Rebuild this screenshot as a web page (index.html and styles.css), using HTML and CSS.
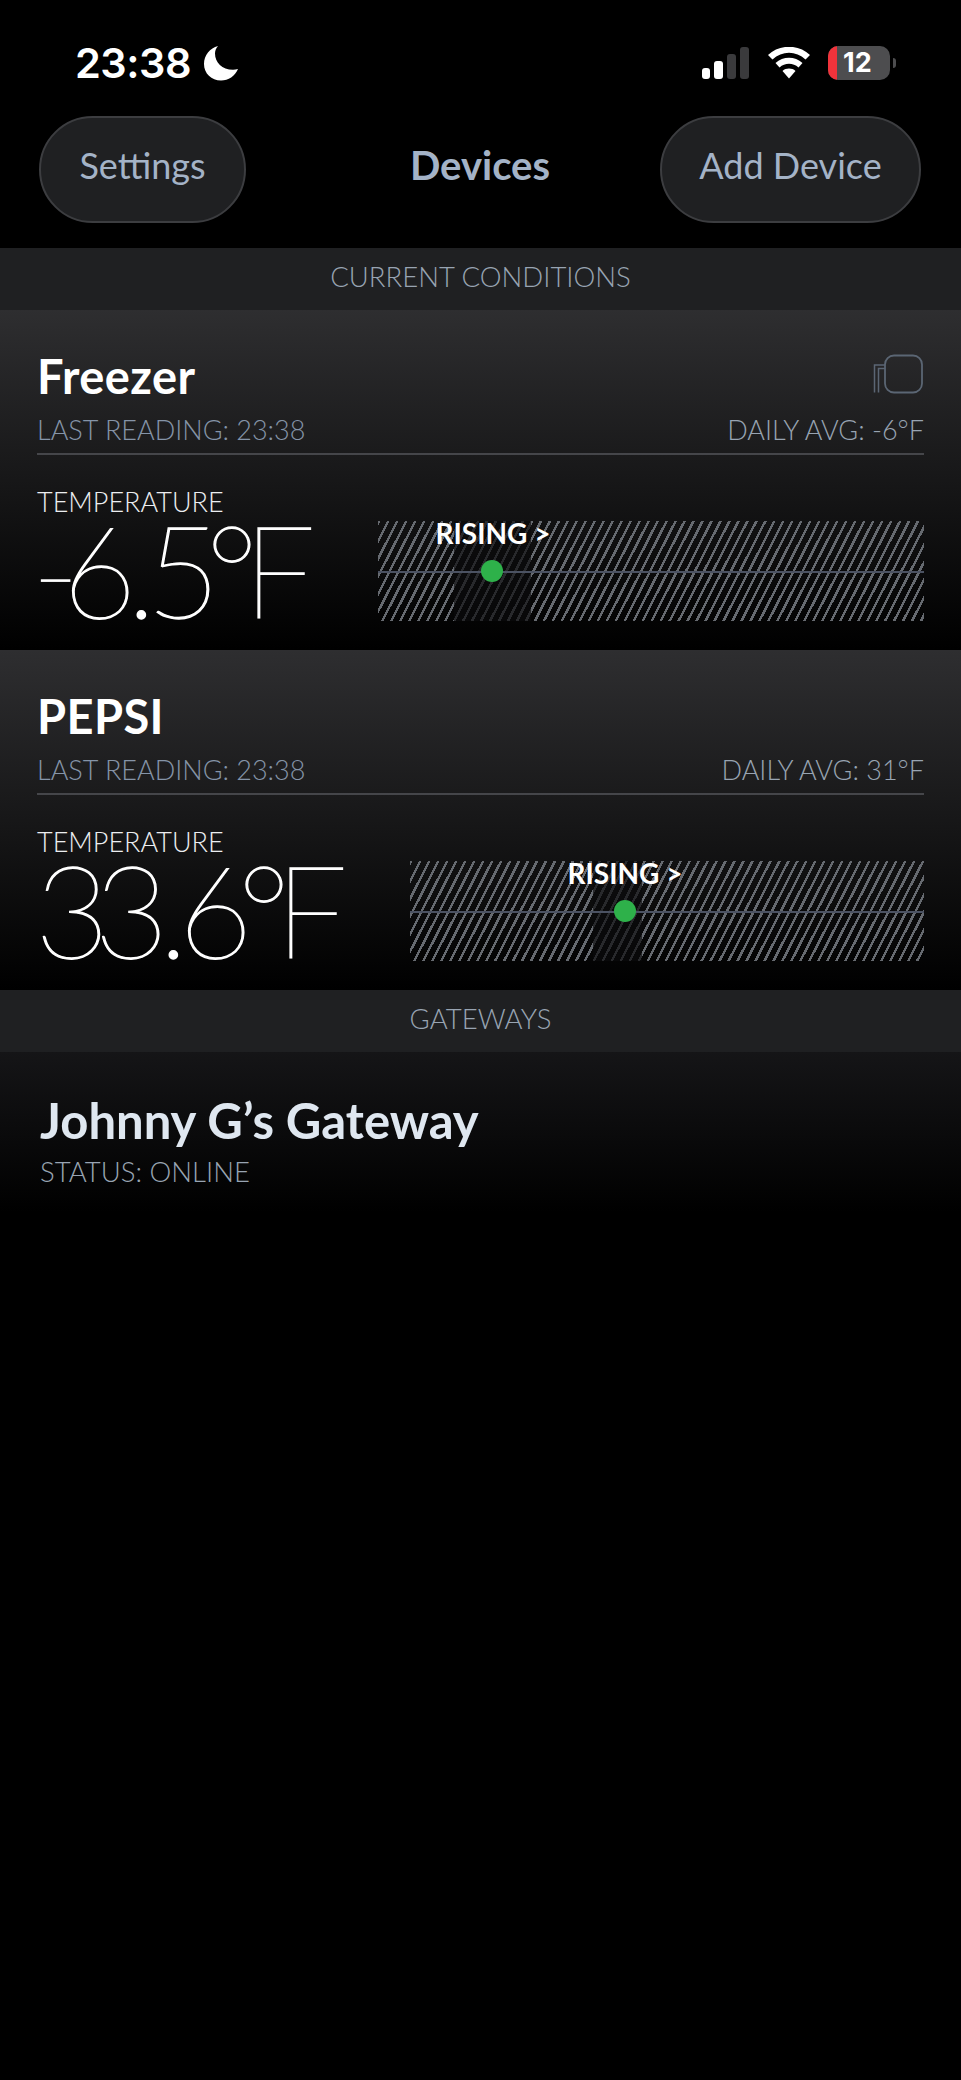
FILE: index.html
```html
<!DOCTYPE html>
<html lang="en">
<head>
<meta charset="utf-8">
<title>Devices</title>
<link rel="stylesheet" href="styles.css">
</head>
<body>
<div class="status">
  <div class="status-left">
    <span class="clock">23:38</span>
    <svg class="moon" viewBox="0 0 36 36"><path d="M15 1C7 3 1 10 1 19c0 9.500 7.500 16.500 17 16.500 7.500 0 14-4.500 17-11.500-1.500.5-3.500.8-5 .8C19 24.800 12 17.500 12 8.500 12 5.800 13 3.300 15 1z" fill="#fff"/></svg>
  </div>
  <div class="status-right">
    <svg class="signal" viewBox="0 0 50 32"><rect x="2" y="21" width="8" height="11" rx="3" fill="#fff"/><rect x="14" y="14" width="9" height="18" rx="3" fill="#fff"/><rect x="27" y="7" width="9" height="25" rx="3" fill="#3a3a3c"/><rect x="40" y="0" width="9" height="32" rx="3" fill="#3a3a3c"/></svg>
    <svg class="wifi" viewBox="0 0 42 32"><path d="M21 31.500 14.500 24c3.500-3.200 9.500-3.200 13 0z" fill="#fff"/><path d="M11.500 20.500 7.500 16c7.500-7 19.500-7 27 0l-4 4.500c-5.300-5-13.700-5-19 0z" fill="#fff"/><path d="M4.500 12.500 0 8c11.500-11 30.500-11 42 0l-4.500 4.500C28 3.500 14 3.500 4.500 12.500z" fill="#fff"/></svg>
    <div class="battery"><span class="battery-red"></span><span class="battery-num">12</span></div>
    <span class="battery-tip"></span>
  </div>
</div>

<nav class="nav">
  <button class="pill pill-settings">Settings</button>
  <h1 class="nav-title">Devices</h1>
  <button class="pill pill-add">Add Device</button>
</nav>

<h2 class="section">CURRENT CONDITIONS</h2>

<section class="card">
  <div class="card-top">
    <h3 class="name">Freezer</h3>
    <svg class="device" viewBox="0 0 52 40" fill="none" stroke="#5b6674" stroke-width="1.800"><rect x="13" y="1.500" width="37" height="37" rx="9"/><path d="M13 11H2.500v27.500M6.500 38.500V14.500H13" stroke-width="1.500"/></svg>
  </div>
  <div class="meta"><span>LAST READING: 23:38</span><span class="meta-avg">DAILY AVG: -6°F</span></div>
  <div class="reading">
    <div class="temp">
      <div class="temp-label">TEMPERATURE</div>
      <div class="temp-value"><span class="temp-minus">-</span>6<span class="temp-point">.</span>5°F</div>
    </div>
    <div class="hatch">
      <span class="hatch-dim" style="left:76px;width:77px"></span>
      <span class="trend" style="left:57px">RISING &gt;</span>
      <span class="dot" style="left:103px"></span>
    </div>
  </div>
</section>

<section class="card">
  <div class="card-top">
    <h3 class="name">PEPSI</h3>
  </div>
  <div class="meta"><span>LAST READING: 23:38</span><span class="meta-avg">DAILY AVG: 31°F</span></div>
  <div class="reading">
    <div class="temp">
      <div class="temp-label">TEMPERATURE</div>
      <div class="temp-value">33<span class="temp-point">.</span>6°F</div>
    </div>
    <div class="hatch">
      <span class="hatch-dim" style="left:183px;width:49px"></span>
      <span class="trend" style="left:157px">RISING &gt;</span>
      <span class="dot" style="left:204px"></span>
    </div>
  </div>
</section>

<h2 class="section">GATEWAYS</h2>

<section class="gateway">
  <h3 class="gateway-name">Johnny G’s Gateway</h3>
  <div class="gateway-status">STATUS: ONLINE</div>
</section>
</body>
</html>
```
FILE: styles.css
```css
* { box-sizing: border-box; }
html, body { margin: 0; padding: 0; background: #000; }
body { width: 961px; height: 2080px; overflow: hidden; font-family: "Lato", "Liberation Sans", sans-serif; color: #fff; }
h1, h2, h3 { margin: 0; font-weight: normal; }

.status { height: 116px; display: flex; justify-content: space-between; align-items: flex-start; padding: 42px 65px 0 75px; }
.status-left { display: flex; align-items: center; gap: 12px; }
.clock { font-family: "Inter", sans-serif; font-weight: 600; font-size: 41.500px; line-height: 42px; letter-spacing: -0.5px; }
.moon { width: 36px; height: 36px; }
.status-right { display: flex; align-items: center; margin-top: 4px; }
.signal { width: 50px; height: 32px; margin-right: 18px; }
.wifi { width: 42px; height: 32px; margin-right: 18px; }
.battery { width: 62px; height: 34px; border-radius: 10px; background: #4d4d4f; overflow: hidden; display: flex; align-items: center; }
.battery-red { width: 9px; height: 34px; background: #f0333b; }
.battery-num { font-family: "Inter", sans-serif; font-weight: 700; font-size: 27px; line-height: 34px; margin-left: 6px; }
.battery-tip { width: 3px; height: 10px; border-radius: 0 3px 3px 0; background: #4d4d4f; margin-left: 3px; }

.nav { height: 132px; display: grid; grid-template-columns: 1fr auto 1fr; align-items: start; padding: 0 40px 0 39px; }
.pill { height: 107px; border-radius: 54px; border: 2px solid #3c3d40; background: #1f2022; color: #a4b3c7; font-family: "Lato", sans-serif; font-size: 36px; padding: 0 0 9px; }
.pill-settings { width: 207px; justify-self: start; }
.pill-add { width: 261px; justify-self: end; }
.nav-title { font-size: 40px; font-weight: 700; color: #a4b3c7; line-height: 98px; }

.section { height: 62px; background: #1f2022; color: #98a4b2; font-size: 27.500px; line-height: 58px; text-align: center; font-weight: 300; }

.card { height: 340px; padding: 0 37px; background: linear-gradient(#2e2e30, #000); }
.card-top { height: 100px; display: flex; justify-content: space-between; align-items: flex-start; padding-top: 36px; }
.name { font-size: 47px; line-height: 60px; font-weight: 700; letter-spacing: 0.4px; }
.device { width: 52px; height: 40px; margin-top: 8px; }
.meta { height: 45px; display: flex; justify-content: space-between; border-bottom: 2px solid #45464a; font-size: 27px; line-height: 30px; padding-top: 5px; color: #8594a8; font-weight: 300; }
.meta-avg { color: #98a4b2; }
.reading { display: flex; gap: 78px; padding-top: 32px; }
.temp { flex: none; }
.temp-label { font-size: 27px; line-height: 30px; font-weight: 300; color: #eceef0; }
.temp-value { font-size: 128px; line-height: 104px; font-weight: 100; letter-spacing: -15px; -webkit-text-stroke: 1.300px #fff; margin-left: -2px; }
.temp-minus { letter-spacing: -17px; margin-left: -3px; }
.temp-point { margin: 0 5px; }
.hatch { position: relative; flex: 1; height: 100px; margin-top: 34px; background: repeating-linear-gradient(117deg, #666a70 0, #666a70 2.400px, transparent 2.400px, transparent 8px); }
.hatch::before { content: ""; position: absolute; z-index: 1; left: 0; right: 0; top: 50px; height: 2px; background: #4b5262; }
.hatch-dim { position: absolute; top: 0; bottom: 0; background: rgba(10, 10, 12, 0.68); }
.trend { position: absolute; z-index: 2; top: -2px; font-size: 28px; line-height: 28px; font-weight: 700; white-space: nowrap; }
.dot { position: absolute; z-index: 2; top: 39px; width: 22px; height: 22px; border-radius: 50%; background: #2eb14a; }

.gateway { height: 160px; padding: 40px 40px 0; background: linear-gradient(#151517, #000); }
.gateway-name { font-size: 49px; line-height: 56px; font-weight: 700; color: #dfe7f0; }
.gateway-status { font-size: 27.500px; line-height: 30px; font-weight: 300; color: #98a4b2; margin-top: 9px; }
```
